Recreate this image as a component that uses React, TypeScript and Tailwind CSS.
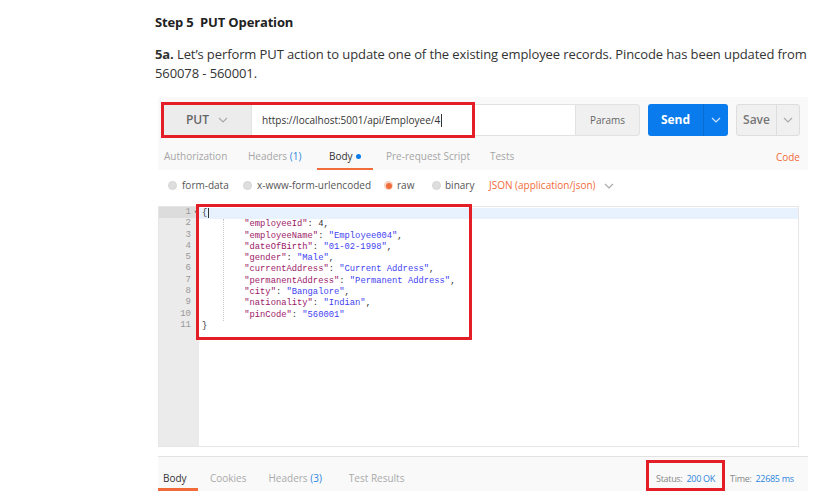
import React from "react";

const Chevron = ({ className = "", color = "#999" }: { className?: string; color?: string }) => (
  <svg width="10" height="6" viewBox="0 0 10 6" className={className}>
    <path d="M1 1 L5 5 L9 1" fill="none" stroke={color} strokeWidth="1.2" />
  </svg>
);

const Radio = ({ on = false }: { on?: boolean }) =>
  on ? (
    <span className="inline-flex items-center justify-center w-[9px] h-[9px] rounded-full bg-[#f7d3c4]">
      <span className="w-[6px] h-[6px] rounded-full bg-[#f26b3a]" />
    </span>
  ) : (
    <span className="inline-block w-[9px] h-[9px] rounded-full bg-[#dedede] border border-[#d4d4d4]" />
  );

type Tok = { t: string; c: string };
const K = "#9c1868";
const S = "#3f3ff2";
const P = "#333333";

const lines: Tok[][] = [
  [{ t: "{", c: P }],
  [{ t: '        "employeeId"', c: K }, { t: ": 4,", c: P }],
  [{ t: '        "employeeName"', c: K }, { t: ": ", c: P }, { t: '"Employee004"', c: S }, { t: ",", c: P }],
  [{ t: '        "dateOfBirth"', c: K }, { t: ": ", c: P }, { t: '"01-02-1998"', c: S }, { t: ",", c: P }],
  [{ t: '        "gender"', c: K }, { t: ": ", c: P }, { t: '"Male"', c: S }, { t: ",", c: P }],
  [{ t: '        "currentAddress"', c: K }, { t: ": ", c: P }, { t: '"Current Address"', c: S }, { t: ",", c: P }],
  [{ t: '        "permanentAddress"', c: K }, { t: ": ", c: P }, { t: '"Permanent Address"', c: S }, { t: ",", c: P }],
  [{ t: '        "city"', c: K }, { t: ": ", c: P }, { t: '"Bangalore"', c: S }, { t: ",", c: P }],
  [{ t: '        "nationality"', c: K }, { t: ": ", c: P }, { t: '"Indian"', c: S }, { t: ",", c: P }],
  [{ t: '        "pinCode"', c: K }, { t: ": ", c: P }, { t: '"560001"', c: S }],
  [{ t: "}", c: P }],
];

export default function App() {
  return (
    <div
      className="w-[836px] h-[491px] bg-white overflow-hidden text-[#333]"
      style={{ fontFamily: '"Open Sans", "Noto Sans", sans-serif' }}
    >
      <div className="pl-[155px] pt-[14px]">
        <div className="text-[13px] leading-[16px] font-bold text-[#222] tracking-[-0.15px]">
          Step 5&nbsp;&nbsp;PUT Operation
        </div>
        <p className="mt-[15px] text-[13px] leading-[19px] text-[#333] tracking-[-0.1px] whitespace-nowrap">
          <span className="font-bold">5a.</span> Let’s perform PUT action to update one of the existing employee records. Pincode has been updated from
          <br />
          560078 - 560001.
        </p>

        {/* Postman panel */}
        <div className="relative ml-[3px] mt-[14px] w-[650px]">
          {/* top section */}
          <div className="bg-[#f9f9f9] h-[73px] pt-[7px] pl-[4px] pr-[8px]">
            <div className="flex h-[32px]">
              <div className="w-[90px] flex items-center justify-center gap-[9px] bg-[#ececec] border border-[#e2e2e2] rounded-l-[3px]">
                <span className="text-[12px] text-[#666] font-semibold">PUT</span>
                <Chevron color="#aaa" />
              </div>
              <div className="w-[323px] flex items-center bg-white border-y border-[#e2e2e2] pl-[10px]">
                <span className="text-[10px] text-[#333]">https://localhost:5001/api/Employee/4</span>
                <span className="w-px h-[13px] bg-[#333] ml-[1px]" />
              </div>
              <div className="w-[65px] flex items-center justify-center bg-[#f0f0f0] border border-[#e2e2e2] rounded-r-[3px] text-[10px] text-[#666]">
                Params
              </div>
              <div className="ml-[8px] w-[80px] flex bg-[#097bed] rounded-[3px]">
                <div className="w-[55px] flex items-center justify-center text-[12px] font-bold text-white">Send</div>
                <div className="w-[25px] flex items-center justify-center border-l border-[#0a6cd3]">
                  <Chevron color="#cfe4fb" />
                </div>
              </div>
              <div className="ml-[8px] w-[64px] flex bg-[#f0f0f0] border border-[#dedede] rounded-[3px]">
                <div className="w-[39px] flex items-center justify-center text-[12px] font-semibold text-[#777]">Save</div>
                <div className="flex-1 flex items-center justify-center border-l border-[#dedede]">
                  <Chevron color="#aaa" />
                </div>
              </div>
            </div>
            {/* tabs */}
            <div className="flex h-[34px] text-[10px] -ml-[4px] -mr-[8px]">
              <div className="w-[78px] pl-[6px] pt-[13px] text-[#a6a6a6]">Authorization</div>
              <div className="w-[81px] pl-[12px] pt-[13px] text-[#a6a6a6]">
                Headers <span className="text-[#2e86de]">(1)</span>
              </div>
              <div className="w-[56px] pl-[12px] pt-[13px] text-[#333] border-b-[2px] border-[#f26b3a] flex items-start gap-[3px]">
                <span>Body</span>
                <span className="w-[5px] h-[5px] rounded-full bg-[#097bed] mt-[5px]" />
              </div>
              <div className="w-[105px] pl-[13px] pt-[13px] text-[#a6a6a6]">Pre-request Script</div>
              <div className="pl-[12px] pt-[13px] text-[#a6a6a6]">Tests</div>
              <div className="ml-auto pr-[8px] pt-[14px] text-[#f26b3a]">Code</div>
            </div>
          </div>

          {/* body options */}
          <div className="bg-white h-[36px] flex items-start pt-[8px] text-[10px] text-[#555]">
            <div className="w-[85px] pl-[10px] flex items-center gap-[5px]">
              <Radio />
              <span>form-data</span>
            </div>
            <div className="w-[141px] flex items-center gap-[5px]">
              <Radio />
              <span>x-www-form-urlencoded</span>
            </div>
            <div className="w-[48px] flex items-center gap-[4px]">
              <Radio on />
              <span>raw</span>
            </div>
            <div className="w-[57px] flex items-center gap-[4px]">
              <Radio />
              <span>binary</span>
            </div>
            <div className="flex items-center gap-[8px] text-[#f26b3a]">
              <span>JSON (application/json)</span>
              <Chevron color="#aaa" />
            </div>
          </div>

          {/* editor */}
          <div className="w-[641px] h-[241px] flex border border-[#e6e6e6] bg-white">
            <div className="w-[40px] bg-[#ebebeb] flex flex-col">
              {lines.map((_, i) => (
                <div
                  key={i}
                  className={
                    "relative h-[11.3px] leading-[11.3px] text-right pr-[8px] text-[9px] text-[#999] " +
                    (i === 0 ? "bg-[#dcdcdc]" : "")
                  }
                  style={{ fontFamily: '"Liberation Mono", monospace' }}
                >
                  {i + 1}
                  {i === 0 && <span className="absolute right-[1px] top-0 text-[7px] text-[#777]">▾</span>}
                </div>
              ))}
            </div>
            <div
              className="relative flex-1 text-[8.8px] pt-px"
              style={{ fontFamily: '"Liberation Mono", "DejaVu Sans Mono", monospace' }}
            >
              <div className="absolute left-[24px] top-[12.3px] h-[101.7px] border-l border-dotted border-[#c8c8c8]" />
              {lines.map((ln, i) => (
                <div
                  key={i}
                  className={"h-[11.3px] leading-[11.3px] whitespace-pre pl-[3px] " + (i === 0 ? "bg-[#e8f2fe]" : "")}
                >
                  {ln.map((tk, j) => (
                    <span key={j} style={{ color: tk.c }}>
                      {tk.t}
                    </span>
                  ))}
                  {i === 0 && <span className="inline-block w-px h-[10px] bg-[#333] align-middle ml-[1px]" />}
                </div>
              ))}
            </div>
          </div>

          {/* response bar */}
          <div className="mt-[9px] h-[35px] bg-[#f9f9f9] border-t border-[#e2e2e2] flex text-[10px] relative">
            <div className="w-[40px] pl-[5px] pt-[14px] text-[#333] border-b-[3px] border-[#f26b3a] h-[34px]">Body</div>
            <div className="ml-[12px] pt-[14px] text-[#aaa]">Cookies</div>
            <div className="ml-[22px] pt-[14px] text-[#aaa]">
              Headers <span className="text-[#2e86de]">(3)</span>
            </div>
            <div className="ml-[27px] pt-[14px] text-[#aaa]">Test Results</div>
            <div className="absolute left-[498px] top-[15px] flex gap-[4px] text-[9px] tracking-[-0.3px] text-[#888]">
              <span>Status:</span>
              <span className="text-[#2e86de]">200 OK</span>
            </div>
            <div className="absolute left-[572px] top-[15px] flex gap-[4px] text-[9px] tracking-[-0.3px] text-[#888]">
              <span>Time:</span>
              <span className="text-[#2e86de]">22685 ms</span>
            </div>
          </div>

          {/* red highlight boxes */}
          <div className="absolute left-[3px] top-[5px] w-[314px] h-[36px] border-[3px] border-[#e31e26]" />
          <div className="absolute left-[38px] top-[107px] w-[276px] h-[136px] border-[3px] border-[#e31e26]" />
          <div className="absolute left-[488px] top-[363px] w-[79px] h-[31px] border-[3px] border-[#e31e26]" />
        </div>
      </div>
    </div>
  );
}
